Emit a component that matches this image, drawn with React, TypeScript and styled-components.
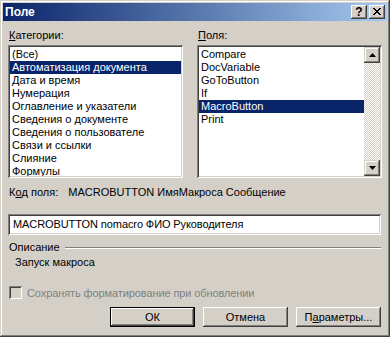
import React, { useState } from "react";
import styled, { createGlobalStyle } from "styled-components";

const GlobalStyle = createGlobalStyle`
  html, body {
    margin: 0;
    padding: 0;
    background: #d4d0c8;
  }
  * {
    box-sizing: border-box;
  }
`;

const FONT = `"Liberation Sans", Arial, sans-serif`;

const Window = styled.div`
  width: 390px;
  height: 337px;
  padding: 3px;
  background: #d4d0c8;
  box-shadow: inset -1px -1px #404040, inset 1px 1px #d4d0c8,
    inset -2px -2px #808080, inset 2px 2px #ffffff;
  display: flex;
  flex-direction: column;
  font-family: ${FONT};
  font-size: 11px;
  color: #000;
`;

const TitleBar = styled.div`
  height: 18px;
  display: flex;
  align-items: center;
  padding: 0 2px 0 2px;
  background: linear-gradient(to right, #0a246a, #a6caf0);
`;

const Title = styled.div`
  flex: 1;
  color: #fff;
  font-weight: bold;
  font-size: 12px;
`;

const CaptionButton = styled.div<{ $gap?: number }>`
  width: 16px;
  height: 14px;
  margin-left: ${(p) => p.$gap ?? 0}px;
  background: #d4d0c8;
  box-shadow: inset -1px -1px #404040, inset 1px 1px #ffffff,
    inset -2px -2px #808080;
  display: flex;
  align-items: center;
  justify-content: center;
  font-weight: bold;
  font-size: 12px;
  color: #000;
  padding-bottom: 1px;
`;

const Body = styled.div`
  flex: 1;
  display: flex;
  flex-direction: column;
  padding: 8px 5px 0 5px;
`;

const Columns = styled.div`
  display: flex;
  gap: 14px;
`;

const Column = styled.div<{ $width: number }>`
  width: ${(p) => p.$width}px;
  display: flex;
  flex-direction: column;
`;

const Label = styled.div`
  height: 13px;
  line-height: 13px;
  margin-bottom: 3px;
  padding-left: 1px;
  white-space: nowrap;
`;

const ListBox = styled.div`
  height: 133px;
  background: #fff;
  padding: 2px;
  box-shadow: inset 1px 1px #808080, inset -1px -1px #ffffff,
    inset 2px 2px #404040, inset -2px -2px #d4d0c8;
  display: flex;
  overflow: hidden;
`;

const Items = styled.div`
  flex: 1;
  overflow: hidden;
  padding-top: 1px;
`;

const Item = styled.div<{ $selected?: boolean }>`
  height: 13px;
  line-height: 13px;
  padding-left: 2px;
  white-space: nowrap;
  background: ${(p) => (p.$selected ? "#0a246a" : "transparent")};
  color: ${(p) => (p.$selected ? "#fff" : "#000")};
`;

const ScrollBar = styled.div`
  width: 16px;
  display: flex;
  flex-direction: column;
  justify-content: space-between;
  background-color: #d4d0c8;
  background-image: conic-gradient(
    #ffffff 25%,
    #d4d0c8 0 50%,
    #ffffff 0 75%,
    #d4d0c8 0
  );
  background-size: 2px 2px;
`;

const ArrowButton = styled.div`
  width: 16px;
  height: 16px;
  background: #d4d0c8;
  box-shadow: inset -1px -1px #404040, inset 1px 1px #d4d0c8,
    inset -2px -2px #808080, inset 2px 2px #ffffff;
  display: flex;
  align-items: center;
  justify-content: center;
`;

const CodeRow = styled.div`
  margin-top: 8px;
  height: 13px;
  line-height: 13px;
  display: flex;
  padding-left: 1px;
`;

const CodeValue = styled.span`
  margin-left: 10px;
`;

const TextBox = styled.div`
  margin-top: 15px;
  height: 21px;
  width: 373px;
  background: #fff;
  padding: 0 5px;
  line-height: 21px;
  letter-spacing: -0.1px;
  box-shadow: inset 1px 1px #808080, inset -1px -1px #ffffff,
    inset 2px 2px #404040, inset -2px -2px #d4d0c8;
  white-space: nowrap;
`;

const GroupHeader = styled.div`
  margin-top: 6px;
  height: 13px;
  line-height: 13px;
  display: flex;
  align-items: center;
  gap: 5px;
  padding-left: 1px;
  width: 373px;
`;

const Groove = styled.div`
  flex: 1;
  height: 2px;
  border-top: 1px solid #808080;
  border-bottom: 1px solid #ffffff;
`;

const Description = styled.div`
  margin-top: 2px;
  height: 13px;
  line-height: 13px;
  padding-left: 7px;
`;

const CheckRow = styled.div`
  margin-top: 17px;
  height: 13px;
  display: flex;
  align-items: center;
  gap: 5px;
  padding-left: 1px;
  color: #808080;
  letter-spacing: -0.1px;
`;

const CheckBox = styled.div`
  width: 13px;
  height: 13px;
  background: #d4d0c8;
  box-shadow: inset 1px 1px #808080, inset -1px -1px #ffffff,
    inset 2px 2px #404040, inset -2px -2px #d4d0c8;
`;

const Buttons = styled.div`
  margin-top: 8px;
  display: flex;
  justify-content: flex-end;
  gap: 8px;
  padding-right: 1px;
`;

const Button = styled.div<{ $default?: boolean }>`
  width: 85px;
  height: 20px;
  display: flex;
  align-items: center;
  justify-content: center;
  background: #d4d0c8;
  border: ${(p) => (p.$default ? "1px solid #000" : "none")};
  box-shadow: inset -1px -1px #404040, inset 1px 1px #ffffff,
    inset -2px -2px #808080, inset 2px 2px #d4d0c8;
`;

const Arrow = ({ down }: { down?: boolean }) => (
  <svg width="7" height="4" viewBox="0 0 7 4">
    <path d={down ? "M0 0H7L3.5 4Z" : "M3.5 0L7 4H0Z"} fill="#000" />
  </svg>
);

const CloseGlyph = () => (
  <svg width="8" height="7" viewBox="0 0 8 7" shapeRendering="crispEdges">
    <path
      d="M0 0h2v1h-2zM6 0h2v1h-2zM1 1h2v1h-2zM5 1h2v1h-2zM2 2h4v1h-4zM3 3h2v1h-2zM2 4h4v1h-4zM1 5h2v1h-2zM5 5h2v1h-2zM0 6h2v1h-2zM6 6h2v1h-2z"
      fill="#000"
    />
  </svg>
);

const categories = [
  "(Все)",
  "Автоматизация документа",
  "Дата и время",
  "Нумерация",
  "Оглавление и указатели",
  "Сведения о документе",
  "Сведения о пользователе",
  "Связи и ссылки",
  "Слияние",
  "Формулы",
];

const fields = [
  "Compare",
  "DocVariable",
  "GoToButton",
  "If",
  "MacroButton",
  "Print",
];

const App = () => {
  const [category, setCategory] = useState(1);
  const [field, setField] = useState(4);

  return (
    <>
      <GlobalStyle />
      <Window>
        <TitleBar>
          <Title>Поле</Title>
          <CaptionButton>?</CaptionButton>
          <CaptionButton $gap={2}>
            <CloseGlyph />
          </CaptionButton>
        </TitleBar>
        <Body>
          <Columns>
            <Column $width={175}>
              <Label>
                <u>К</u>атегории:
              </Label>
              <ListBox>
                <Items>
                  {categories.map((c, i) => (
                    <Item
                      key={c}
                      $selected={i === category}
                      onClick={() => setCategory(i)}
                    >
                      {c}
                    </Item>
                  ))}
                </Items>
              </ListBox>
            </Column>
            <Column $width={185}>
              <Label>
                <u>П</u>оля:
              </Label>
              <ListBox>
                <Items>
                  {fields.map((f, i) => (
                    <Item
                      key={f}
                      $selected={i === field}
                      onClick={() => setField(i)}
                    >
                      {f}
                    </Item>
                  ))}
                </Items>
                <ScrollBar>
                  <ArrowButton>
                    <Arrow />
                  </ArrowButton>
                  <ArrowButton>
                    <Arrow down />
                  </ArrowButton>
                </ScrollBar>
              </ListBox>
            </Column>
          </Columns>
          <CodeRow>
            К<u>о</u>д поля:
            <CodeValue>MACROBUTTON ИмяМакроса Сообщение</CodeValue>
          </CodeRow>
          <TextBox>MACROBUTTON nomacro ФИО Руководителя</TextBox>
          <GroupHeader>
            Описание
            <Groove />
          </GroupHeader>
          <Description>Запуск макроса</Description>
          <CheckRow>
            <CheckBox />
            Сохранять форматирование при обновлении
          </CheckRow>
          <Buttons>
            <Button $default>ОК</Button>
            <Button>Отмена</Button>
            <Button>
              П<u>а</u>раметры...
            </Button>
          </Buttons>
        </Body>
      </Window>
    </>
  );
};

export default App;
